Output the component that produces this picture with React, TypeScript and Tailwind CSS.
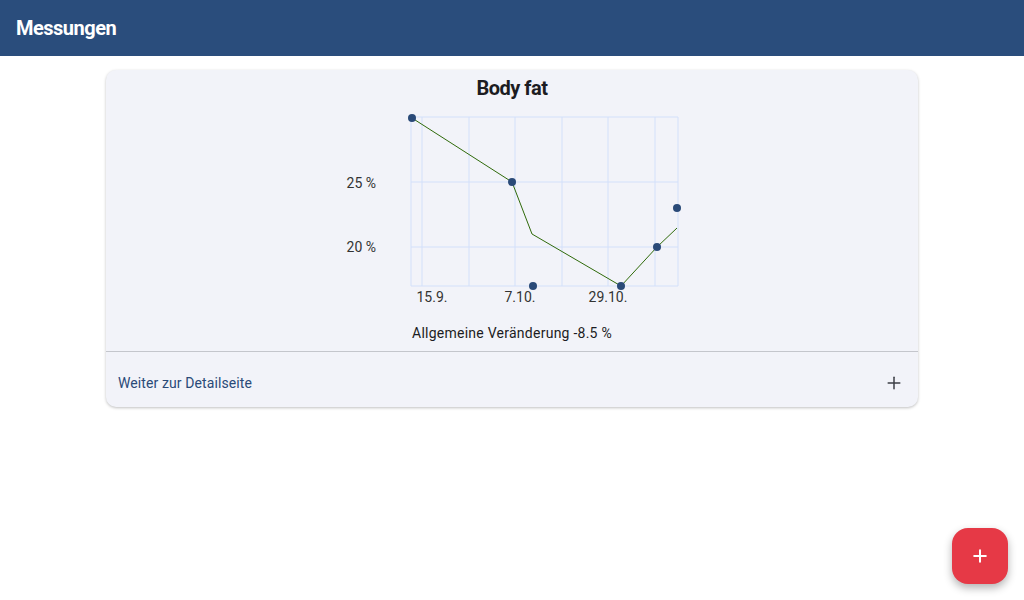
import { Plus } from 'lucide-react'

const gridX = [74, 85, 132, 178, 225, 271, 318, 341]
const gridY = [7, 72, 137, 176]
const line = '75,8 175,72 195,124 284,176 320,137 340,118'
const points: [number, number][] = [
  [75, 8],
  [175, 72],
  [196, 176],
  [284, 176],
  [320, 137],
  [340, 98],
]

function Chart() {
  return (
    <svg width={350} height={200} className="block mx-auto mt-2">
      {gridX.map((x) => (
        <line key={'x' + x} x1={x} y1={7} x2={x} y2={176} stroke="#d3e0fa" strokeWidth={1} />
      ))}
      {gridY.map((y) => (
        <line key={'y' + y} x1={74} y1={y} x2={341} y2={y} stroke="#d3e0fa" strokeWidth={1} />
      ))}
      <polyline points={line} fill="none" stroke="#2f6a0a" strokeWidth={1} />
      {points.map(([x, y], i) => (
        <circle key={i} cx={x} cy={y} r={4} fill="#2a4a78" />
      ))}
      <g fill="#333" fontSize={14} fontFamily="Roboto, sans-serif">
        <text x={39} y={78} textAnchor="end">25 %</text>
        <text x={39} y={142} textAnchor="end">20 %</text>
        <text x={95} y={192} textAnchor="middle">15.9.</text>
        <text x={183} y={192} textAnchor="middle">7.10.</text>
        <text x={271} y={192} textAnchor="middle">29.10.</text>
      </g>
    </svg>
  )
}

export default function App() {
  return (
    <div className="min-h-[600px] bg-white relative" style={{ fontFamily: 'Roboto, "Noto Sans", sans-serif' }}>
      <header className="h-14 bg-[#2a4d7c] flex items-center px-4">
        <h1 className="text-white text-xl font-bold tracking-[-0.5px]">Messungen</h1>
      </header>

      <main className="pt-[14px] flex justify-center">
        <div className="w-[812px] rounded-[10px] bg-[#f2f3f9] shadow-[0_1px_3px_rgba(0,0,0,0.25)] overflow-hidden">
          <div className="pt-1 pb-2">
            <h2 className="text-center text-xl leading-7 font-bold text-[#1c1c22] tracking-[-0.5px]">Body fat</h2>
            <Chart />
            <p className="mt-[13px] text-center text-sm leading-5 text-[#1c1c22] tracking-[0.25px]">Allgemeine Veränderung -8.5 %</p>
          </div>
          <div className="border-t border-[#c4c6cc] h-14 pt-[6px] flex items-center justify-between pl-3 pr-[14px]">
            <span className="text-sm text-[#2a4a78] tracking-[0.1px]">Weiter zur Detailseite</span>
            <Plus className="w-5 h-5 text-[#3c3f46]" strokeWidth={1.8} />
          </div>
        </div>
      </main>

      <button className="absolute right-4 bottom-4 w-14 h-14 rounded-2xl bg-[#e63946] shadow-[0_4px_8px_rgba(0,0,0,0.3)] flex items-center justify-center">
        <Plus className="w-5 h-5 text-white" strokeWidth={2.4} />
      </button>
    </div>
  )
}
